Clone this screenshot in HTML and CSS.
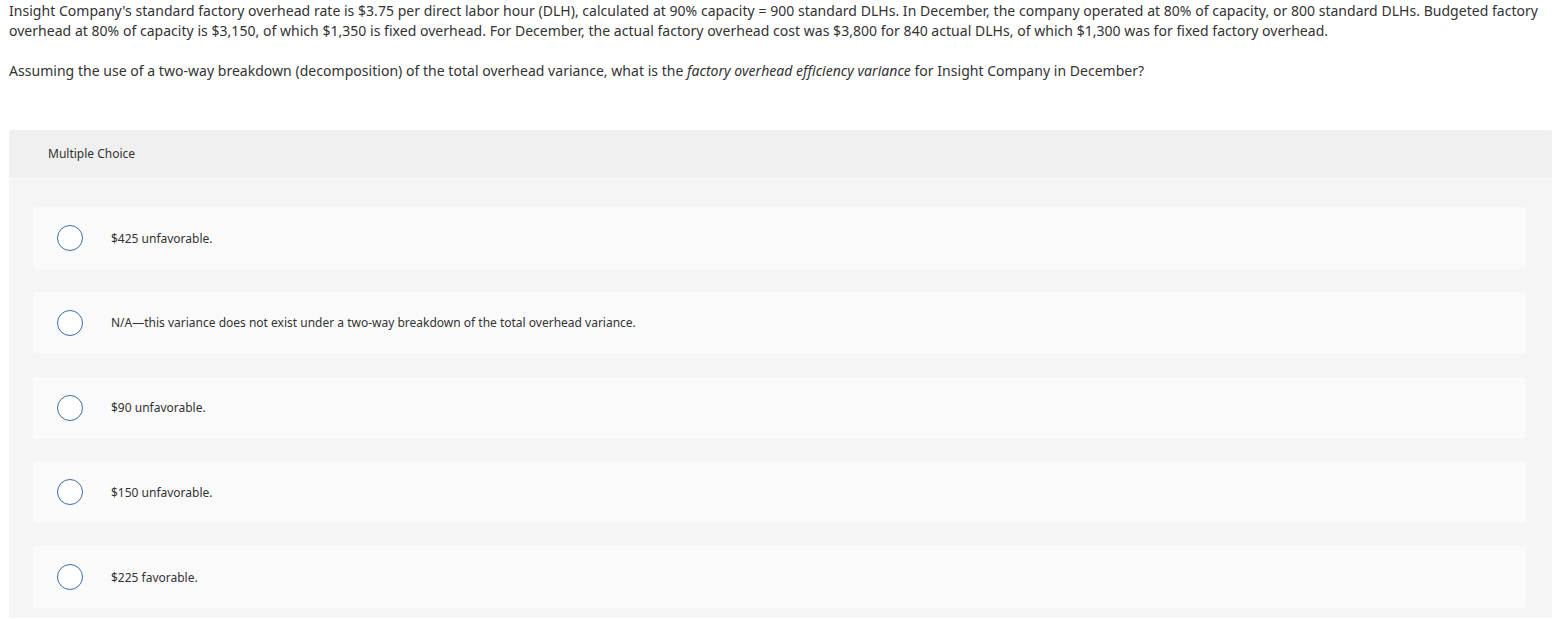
FILE: index.html
```html
<!DOCTYPE html>
<html>
<head>
<meta charset="utf-8">
<link rel="stylesheet" href="styles.css">
</head>
<body>
<div class="question">
  <p>Insight Company's standard factory overhead rate is $3.75 per direct labor hour (DLH), calculated at 90% capacity = 900 standard DLHs. In December, the company operated at 80% of capacity, or 800 standard DLHs. Budgeted factory overhead at 80% of capacity is $3,150, of which $1,350 is fixed overhead. For December, the actual factory overhead cost was $3,800 for 840 actual DLHs, of which $1,300 was for fixed factory overhead.</p>
  <p>Assuming the use of a two-way breakdown (decomposition) of the total overhead variance, what is the <em>factory overhead efficiency variance</em> for Insight Company in December?</p>
</div>
<div class="mc">
  <div class="mc-head">Multiple Choice</div>
  <div class="mc-body">
    <div class="opt"><span class="radio"></span><span class="label">$425 unfavorable.</span></div>
    <div class="opt"><span class="radio"></span><span class="label">N/A—this variance does not exist under a two-way breakdown of the total overhead variance.</span></div>
    <div class="opt"><span class="radio"></span><span class="label">$90 unfavorable.</span></div>
    <div class="opt"><span class="radio"></span><span class="label">$150 unfavorable.</span></div>
    <div class="opt"><span class="radio"></span><span class="label">$225 favorable.</span></div>
  </div>
</div>
</body>
</html>
```
FILE: styles.css
```css
body {
  margin: 0;
  padding: 0 11px 0 9px;
  font-family: "Noto Sans", "Open Sans", sans-serif;
  color: #333;
  background: #fff;
}
.question {
  padding-top: 1px;
  font-size: 14px;
  line-height: 20px;
  letter-spacing: 0.03px;
}
.question p {
  margin: 0 0 20px 0;
}
.question em {
  font-style: italic;
}
.mc {
  margin-top: 49px;
  background: #f5f5f5;
  border-radius: 3px 3px 0 0;
}
.mc-head {
  height: 47px;
  background: #f0f0f0;
  border-radius: 3px 3px 0 0;
  display: flex;
  align-items: center;
  padding-left: 39px;
  font-size: 12px;
}
.mc-body {
  padding: 30px 26px 10px 24px;
  display: flex;
  flex-direction: column;
  gap: 22.75px;
}
.opt {
  height: 62px;
  background: #fafafa;
  border-radius: 3px;
  display: flex;
  align-items: center;
  padding-left: 24px;
}
.radio {
  width: 24px;
  height: 24px;
  border: 1.5px solid #3b6ea0;
  border-radius: 50%;
  background: #fff;
  flex: none;
}
.label {
  margin-left: 28px;
  font-size: 12px;
}
```
